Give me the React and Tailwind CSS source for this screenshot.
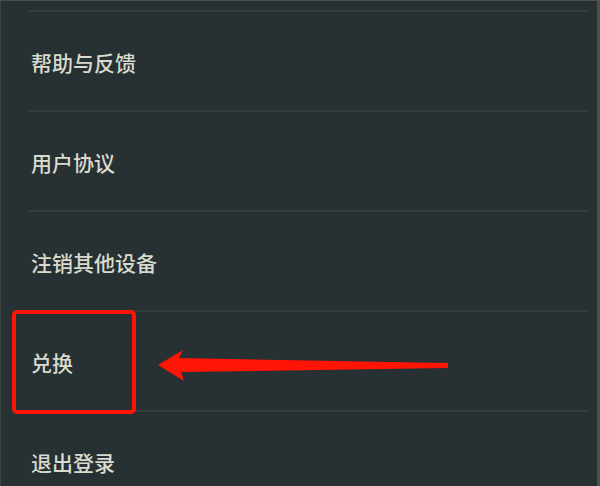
import React from 'react'

const ITEMS = ['帮助与反馈', '用户协议', '注销其他设备', '兑换', '退出登录']

function MenuRow({ label }) {
  return (
    <div className="ml-[28px] mr-[8px] flex h-[100px] items-center border-t-2 border-[#323d3f] pt-[2px] pl-[2px]">
      <span className="text-[21px] font-medium leading-none text-[#d8dacd]">{label}</span>
    </div>
  )
}

function Arrow() {
  return (
    <svg
      className="absolute left-0 top-0"
      width="600"
      height="486"
      viewBox="0 0 600 486"
    >
      <polygon
        points="157,364 182,349 178,357 447,362 447,367 180,371 183,380"
        fill="#ff1405"
      />
    </svg>
  )
}

export default function App() {
  return (
    <div
      className="relative h-[486px] w-[600px] overflow-hidden border-t border-l border-r-[3px] border-[#4a5249] border-l-[#3a4441] bg-[#273033]"
      style={{ fontFamily: '"Noto Sans CJK SC", "Noto Sans", sans-serif' }}
    >
      <div className="pt-[9px]">
        {ITEMS.map((label) => (
          <MenuRow key={label} label={label} />
        ))}
      </div>

      {/* annotation overlay */}
      <div className="absolute left-[11px] top-[309px] h-[104px] w-[124px] rounded-[5px] border-[4px] border-[#ff1405]" />
      <Arrow />
    </div>
  )
}
